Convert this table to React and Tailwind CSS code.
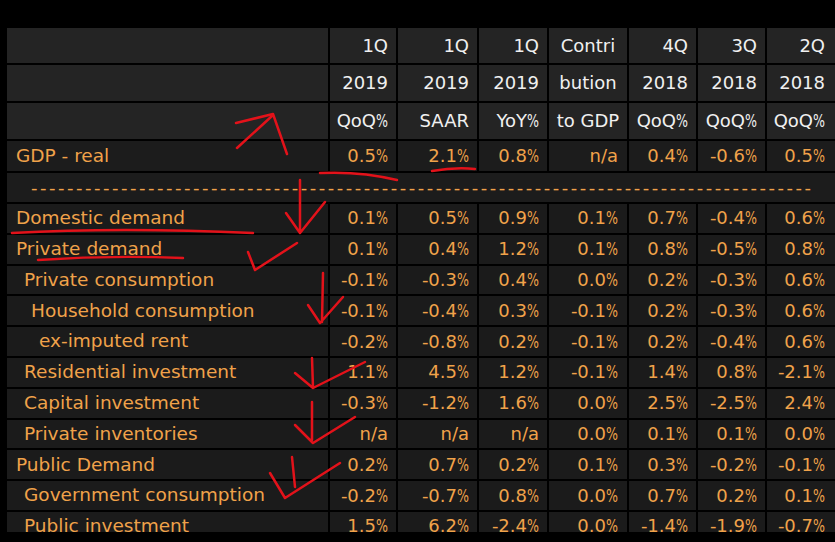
import React from 'react';

const widths = ['w-[66px]', 'w-[79px]', 'w-[68px]', 'w-[78px]', 'w-[67px]', 'w-[67px]', 'w-[68px]'];

const header = [
  ['1Q', '2019', 'QoQ%'],
  ['1Q', '2019', 'SAAR'],
  ['1Q', '2019', 'YoY%'],
  ['Contri', 'bution', 'to GDP'],
  ['4Q', '2018', 'QoQ%'],
  ['3Q', '2018', 'QoQ%'],
  ['2Q', '2018', 'QoQ%'],
];

const rows = [
  ['Domestic demand', 0, ['0.1%', '0.5%', '0.9%', '0.1%', '0.7%', '-0.4%', '0.6%']],
  ['Private demand', 0, ['0.1%', '0.4%', '1.2%', '0.1%', '0.8%', '-0.5%', '0.8%']],
  ['Private consumption', 1, ['-0.1%', '-0.3%', '0.4%', '0.0%', '0.2%', '-0.3%', '0.6%']],
  ['Household consumption', 2, ['-0.1%', '-0.4%', '0.3%', '-0.1%', '0.2%', '-0.3%', '0.6%']],
  ['ex-imputed rent', 3, ['-0.2%', '-0.8%', '0.2%', '-0.1%', '0.2%', '-0.4%', '0.6%']],
  ['Residential investment', 1, ['1.1%', '4.5%', '1.2%', '-0.1%', '1.4%', '0.8%', '-2.1%']],
  ['Capital investment', 1, ['-0.3%', '-1.2%', '1.6%', '0.0%', '2.5%', '-2.5%', '2.4%']],
  ['Private inventories', 1, ['n/a', 'n/a', 'n/a', '0.0%', '0.1%', '0.1%', '0.0%']],
  ['Public Demand', 0, ['0.2%', '0.7%', '0.2%', '0.1%', '0.3%', '-0.2%', '-0.1%']],
  ['Government consumption', 1, ['-0.2%', '-0.7%', '0.8%', '0.0%', '0.7%', '0.2%', '0.1%']],
  ['Public investment', 1, ['1.5%', '6.2%', '-2.4%', '0.0%', '-1.4%', '-1.9%', '-0.7%']],
];

const indent = ['pl-[9px]', 'pl-[17px]', 'pl-[24px]', 'pl-[32px]'];

// the terminal font has a narrow percent sign
function fmt(t) {
  const parts = t.split('%');
  return parts.flatMap((p, i) =>
    i < parts.length - 1
      ? [p, <span key={i} className="inline-block w-[12px] origin-left scale-x-[0.7]">%</span>]
      : [p]
  );
}

function Row({ label, level = 0, values, height, bg, color, headerIdx }) {
  return (
    <div className="flex gap-[2px] shrink-0">
      <div className={`w-[321px] shrink-0 flex items-center text-[18.5px] ${height} ${bg} ${color} ${indent[level]} whitespace-pre`}>
        {label}
      </div>
      {values.map((v, i) => {
        const centered = headerIdx && i === 3;
        return (
          <div
            key={i}
            className={`${widths[i]} shrink-0 flex items-center ${height} ${bg} ${color} whitespace-pre ${
              centered ? 'justify-center' : i === 6 ? 'justify-end pr-[10px]' : i === 3 ? 'justify-end pr-[9px]' : 'justify-end pr-[8px]'
            }`}
          >
            {fmt(v)}
          </div>
        );
      })}
    </div>
  );
}

function Marks() {
  return (
    <svg className="absolute inset-0 pointer-events-none" width="835" height="542" viewBox="0 0 835 542">
      <g fill="none" stroke="#e3121a" strokeWidth="2.5" strokeLinecap="round" strokeLinejoin="round">
        <path d="M237 148 L272 116" />
        <path d="M236 123 L273 114 L287 154" />
        <path d="M320 173 Q360 171 397 180" />
        <path d="M432 171 Q455 167 475 169" />
        <path d="M12 233 Q120 227 253 233" />
        <path d="M300 180 L300 232 M286 213 L300 233 L325 202" />
        <path d="M38 260 Q110 255 183 258" />
        <path d="M248 252 L255 270 L297 243" />
        <path d="M323 273 L322 322 M308 305 L320 323 L343 297" />
        <path d="M312 358 L313 388 M295 373 L313 388 L365 362" />
        <path d="M312 402 L312 440 M295 425 L313 443 L355 417" />
        <path d="M292 457 L295 487 M270 473 L285 498 L340 463" />
      </g>
    </svg>
  );
}

export default function App() {
  const white = 'text-[#f0f0f0]';
  const orange = 'text-[#f0a24a]';
  return (
    <div className="relative w-[835px] h-[542px] overflow-hidden bg-black font-['DejaVu_Sans',sans-serif] text-[18px] leading-none">
      <div className="pt-[28px] pl-[7px]">
        <div className="flex flex-col gap-[2px] h-[504px] overflow-hidden">
          <Row label="" values={header.map((h) => h[0])} height="h-[35px]" bg="bg-[#242424]" color={white} headerIdx />
          <Row label="" values={header.map((h) => h[1])} height="h-[36px]" bg="bg-[#242424]" color={white} headerIdx />
          <Row label="" values={header.map((h) => h[2])} height="h-[36px]" bg="bg-[#242424]" color={white} headerIdx />
          <Row
            label="GDP - real"
            values={['0.5%', '2.1%', '0.8%', 'n/a', '0.4%', '-0.6%', '0.5%']}
            height="h-[30px]"
            bg="bg-[#1c1c1c]"
            color={orange}
          />
          {/* separator row */}
          <div className={`h-[29px] shrink-0 bg-[#1c1c1c] flex items-center pl-[24px] ${orange} tracking-[2.5px] whitespace-pre overflow-hidden`}>
            {'-'.repeat(87)}
          </div>
          {rows.map(([label, level, values]) => (
            <Row key={label} label={label} level={level} values={values} height="h-[28.8px]" bg="bg-[#1b1b1b]" color={orange} />
          ))}
        </div>
      </div>
      <Marks />
    </div>
  );
}
